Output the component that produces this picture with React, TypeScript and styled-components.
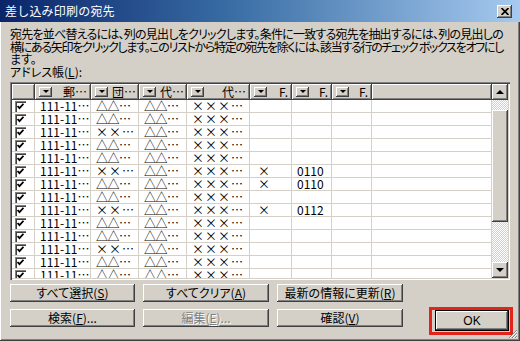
import React, { useLayoutEffect, useRef, useState } from 'react'
import styled, { createGlobalStyle } from 'styled-components'

const GlobalStyle = createGlobalStyle`
  html, body {
    margin: 0;
    padding: 0;
    background: #d4d0c8;
  }
  body {
    font-family: "Noto Sans CJK JP", "Liberation Sans", sans-serif;
  }
`

const FONT = `"Noto Sans CJK JP", "Liberation Sans", sans-serif`

const raised = `
  box-shadow: inset -1px -1px #404040, inset 1px 1px #ffffff, inset -2px -2px #808080;
`

const Window = styled.div`
  position: relative;
  width: 520px;
  height: 341px;
  box-sizing: border-box;
  display: flex;
  flex-direction: column;
  background: #d4d0c8;
  box-shadow: inset -1px -1px #404040, inset 1px 1px #ffffff, inset -2px -2px #808080;
  overflow: hidden;
  font-family: ${FONT};
  color: #000;
`

const TitleBar = styled.div`
  height: 22px;
  flex: none;
  display: flex;
  align-items: center;
  justify-content: space-between;
  padding: 0 8px 0 5px;
  background: linear-gradient(to right, #0a246a 0%, #3a6ea5 45%, #a6caf0 100%);
`

const Title = styled.span`
  color: #ffffff;
  font-size: 12px;
  line-height: 14px;
  letter-spacing: 0.2px;
`

const CloseButton = styled.div`
  width: 15px;
  height: 13px;
  background: #d4d0c8;
  ${raised}
  display: flex;
  align-items: center;
  justify-content: center;
`

const Body = styled.div`
  flex: 1;
  display: flex;
  flex-direction: column;
  padding: 6px 0 0 10px;
`

const Description = styled.div`
  font-size: 12px;
  line-height: 12.5px;
  white-space: nowrap;
  font-feature-settings: "palt";
`

const Line = styled.div`
  white-space: nowrap;
`

const FieldLabel = styled.div`
  font-size: 12px;
  line-height: 12.5px;
  font-feature-settings: "palt";
`

const ListView = styled.div`
  margin-top: 4px;
  width: 500px;
  height: 198px;
  box-sizing: border-box;
  padding: 2px;
  display: flex;
  background: #ffffff;
  box-shadow: inset 1px 1px #808080, inset 2px 2px #404040, inset -1px -1px #ffffff,
    inset -2px -2px #d4d0c8;
`

const Grid = styled.div`
  flex: 1;
  display: flex;
  flex-direction: column;
  overflow: hidden;
`

const HeaderRow = styled.div`
  display: flex;
  height: 16px;
  flex: none;
  background: #d4d0c8;
`

const HeaderCell = styled.div<{ $w?: number }>`
  ${({ $w }) => ($w ? `width: ${$w}px; flex: none;` : 'flex: 1;')}
  box-sizing: border-box;
  height: 16px;
  display: flex;
  align-items: center;
  gap: 4px;
  padding: 0 4px 1px 4px;
  ${raised}
  font-size: 12px;
  overflow: hidden;
`

const DropButton = styled.div`
  width: 13px;
  height: 10px;
  flex: none;
  background: #d4d0c8;
  ${raised}
  display: flex;
  align-items: center;
  justify-content: center;
  &::after {
    content: '';
    border-left: 3px solid transparent;
    border-right: 3px solid transparent;
    border-top: 3px solid #000;
    margin-top: -1px;
  }
`

const HeaderLabel = styled.span`
  flex: 1;
  text-align: right;
  white-space: nowrap;
  overflow: hidden;
  line-height: 14px;
`

const Row = styled.div`
  display: flex;
  height: 13px;
  flex: none;
`

const Cell = styled.div<{ $w?: number; $pad?: number }>`
  ${({ $w }) => ($w ? `width: ${$w}px; flex: none;` : 'flex: 1;')}
  box-sizing: border-box;
  height: 13px;
  border-right: 1px solid #d4d0c8;
  border-bottom: 1px solid #d4d0c8;
  padding-left: ${({ $pad }) => $pad ?? 5}px;
  font-size: 12px;
  line-height: 12px;
  white-space: nowrap;
  overflow: hidden;
  display: flex;
  align-items: center;
`

const Marks = styled.span<{ $spread?: boolean }>`
  letter-spacing: ${({ $spread }) => ($spread ? '1px' : '-0.5px')};
  font-size: 12px;
`

const Check = styled.div`
  width: 11px;
  height: 11px;
  box-sizing: border-box;
  background: #ffffff;
  box-shadow: inset 1px 1px #808080, inset 2px 2px #404040, inset -1px -1px #ffffff;
  display: flex;
  align-items: center;
  justify-content: center;
`

const ScrollBar = styled.div`
  width: 16px;
  flex: none;
  display: flex;
  flex-direction: column;
  background: repeating-conic-gradient(#d4d0c8 0 25%, #ffffff 0 50%) 0 0 / 2px 2px;
`

const ScrollButton = styled.div<{ $up?: boolean }>`
  width: 16px;
  height: 16px;
  flex: none;
  background: #d4d0c8;
  ${raised}
  display: flex;
  align-items: center;
  justify-content: center;
  &::after {
    content: '';
    border-left: 4px solid transparent;
    border-right: 4px solid transparent;
    ${({ $up }) => ($up ? 'border-bottom: 4px solid #000;' : 'border-top: 4px solid #000;')}
  }
`

const TrackGap = styled.div<{ $h?: number }>`
  ${({ $h }) => ($h ? `height: ${$h}px; flex: none;` : 'flex: 1;')}
`

const Thumb = styled.div`
  height: 112px;
  flex: none;
  background: #d4d0c8;
  ${raised}
`

const ButtonGrid = styled.div`
  margin-top: 4px;
  display: grid;
  grid-template-columns: 125px 126px 126px 1fr;
  grid-template-rows: 18px 18px;
  column-gap: 8px;
  row-gap: 7px;
`

const Button = styled.div<{ $disabled?: boolean }>`
  height: 18px;
  box-sizing: border-box;
  background: #d4d0c8;
  ${raised}
  display: flex;
  align-items: center;
  justify-content: center;
  font-size: 12px;
  line-height: 14px;
  font-feature-settings: "palt";
  white-space: nowrap;
  color: ${({ $disabled }) => ($disabled ? '#808080' : '#000')};
  text-shadow: ${({ $disabled }) => ($disabled ? '1px 1px #ffffff' : 'none')};
`

const OkFrame = styled.div`
  grid-column: 4;
  grid-row: 2;
  justify-self: end;
  margin-top: -2px;
  margin-right: 7px;
  width: 84px;
  height: 28px;
  box-sizing: border-box;
  border: 3px solid #e3241b;
  padding: 1px 2px 2px 4px;
`

const OkButton = styled(Button)`
  height: 100%;
  box-shadow: 0 0 0 1px #000, inset -1px -1px #404040, inset 1px 1px #ffffff,
    inset -2px -2px #808080;
  font-family: "Liberation Sans", sans-serif;
`

const Grip = styled.svg`
  position: absolute;
  right: 2px;
  bottom: 2px;
`

type RowData = { mark: string; f1?: string; f2?: string }

const rows: RowData[] = [
  { mark: '△△…' },
  { mark: '△△…' },
  { mark: '××…' },
  { mark: '△△…' },
  { mark: '△△…' },
  { mark: '××…', f1: '×', f2: '0110' },
  { mark: '△△…', f1: '×', f2: '0110' },
  { mark: '△△…' },
  { mark: '××…', f1: '×', f2: '0112' },
  { mark: '△△…' },
  { mark: '△△…' },
  { mark: '××…' },
  { mark: '△△…' },
  { mark: '△△…' },
]

const cols = [
  { w: 56, label: '郵…' },
  { w: 48, label: '団…' },
  { w: 48, label: '代…' },
  { w: 63, label: '代…' },
  { w: 42, label: 'F.' },
  { w: 40, label: 'F.' },
  { w: 40, label: 'F.' },
]

// stretches or squeezes a line of text to a given width
const FitLine = ({ width, text }: { width: number; text: string }) => {
  const ref = useRef<HTMLSpanElement>(null)
  const [spacing, setSpacing] = useState(0)
  useLayoutEffect(() => {
    const el = ref.current
    if (!el) return
    const natural = el.getBoundingClientRect().width
    setSpacing((width - natural) / text.length)
  }, [width, text])
  return (
    <Line>
      <span ref={ref} style={{ letterSpacing: `${spacing}px` }}>
        {text}
      </span>
    </Line>
  )
}

const CheckMark = () => (
  <svg width="7" height="7" viewBox="0 0 7 7">
    <path d="M0.5 3 L2.5 5.2 L6.5 0.8" stroke="#000" strokeWidth="1.8" fill="none" />
  </svg>
)

const Hot = ({ k }: { k: string }) => <u>{k}</u>

export default function App() {
  return (
    <>
      <GlobalStyle />
      <Window>
        <TitleBar>
          <Title>差し込み印刷の宛先</Title>
          <CloseButton>
            <svg width="8" height="7" viewBox="0 0 8 7">
              <path d="M0.5 0 L7.5 7 M7.5 0 L0.5 7" stroke="#000" strokeWidth="1.7" />
            </svg>
          </CloseButton>
        </TitleBar>
        <Body>
          <Description>
            <FitLine
              width={493}
              text="宛先を並べ替えるには、列の見出しをクリックします。条件に一致する宛先を抽出するには、列の見出しの"
            />
            <FitLine
              width={493}
              text="横にある矢印をクリックします。このリストから特定の宛先を除くには、該当する行のチェック ボックスをオフにし"
            />
            <Line>ます。</Line>
          </Description>
          <FieldLabel>
            アドレス帳(<Hot k="L" />):
          </FieldLabel>
          <ListView>
            <Grid>
              <HeaderRow>
                <HeaderCell $w={23} />
                {cols.map((c, i) => (
                  <HeaderCell key={i} $w={c.w}>
                    <DropButton />
                    <HeaderLabel>{c.label}</HeaderLabel>
                  </HeaderCell>
                ))}
                <HeaderCell />
              </HeaderRow>
              {rows.map((r, i) => (
                <Row key={i}>
                  <Cell $w={23} $pad={3}>
                    <Check>
                      <CheckMark />
                    </Check>
                  </Cell>
                  <Cell $w={56}>111-11…</Cell>
                  <Cell $w={48}>
                    <Marks $spread={r.mark.startsWith('×')}>{r.mark}</Marks>
                  </Cell>
                  <Cell $w={48}>
                    <Marks>△△…</Marks>
                  </Cell>
                  <Cell $w={63}>
                    <Marks $spread>×××…</Marks>
                  </Cell>
                  <Cell $w={42} $pad={8}>
                    {r.f1}
                  </Cell>
                  <Cell $w={40} $pad={5}>
                    {r.f2}
                  </Cell>
                  <Cell $w={40} />
                  <Cell />
                </Row>
              ))}
            </Grid>
            <ScrollBar>
              <ScrollButton $up />
              <TrackGap $h={10} />
              <Thumb />
              <TrackGap />
              <ScrollButton />
            </ScrollBar>
          </ListView>
          <ButtonGrid>
            <Button>
              すべて選択(<Hot k="S" />)
            </Button>
            <Button>
              すべてクリア(<Hot k="A" />)
            </Button>
            <Button>
              最新の情報に更新(<Hot k="R" />)
            </Button>
            <span />
            <Button>
              検索(<Hot k="F" />)...
            </Button>
            <Button $disabled>
              編集(<Hot k="E" />)...
            </Button>
            <Button>
              確認(<Hot k="V" />)
            </Button>
            <OkFrame>
              <OkButton>OK</OkButton>
            </OkFrame>
          </ButtonGrid>
        </Body>
        <Grip width="10" height="10" viewBox="0 0 10 10">
          <path d="M9 1 L1 9 M9 4 L4 9 M9 7 L7 9" stroke="#808080" strokeWidth="1" />
          <path d="M9 2 L2 9 M9 5 L5 9 M9 8 L8 9" stroke="#ffffff" strokeWidth="1" />
        </Grip>
      </Window>
    </>
  )
}
